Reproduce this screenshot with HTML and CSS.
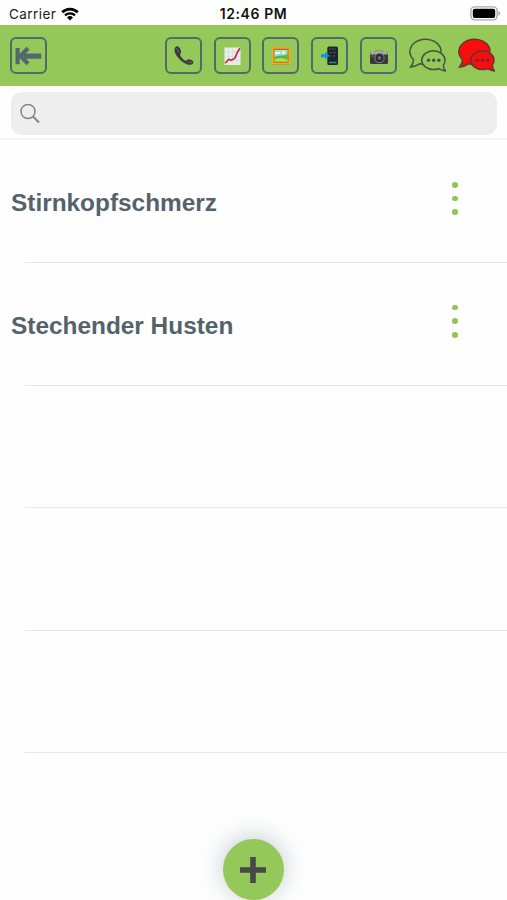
FILE: index.html
```html
<!DOCTYPE html>
<html lang="de">
<head>
    <meta charset="UTF-8">
    <title>Symptome</title>
    <link rel="stylesheet" href="styles.css">
</head>
<body>
    <div class="statusbar">
        <div class="carrier">
            <span>Carrier</span>
            <svg width="18" height="14" viewBox="0 0 18 14">
                <path d="M1.2 5.3a11.2 11.2 0 0 1 15.6 0" fill="none" stroke="#000" stroke-width="2.6"/>
                <path d="M4 8.4a7.2 7.2 0 0 1 10 0" fill="none" stroke="#000" stroke-width="2.3"/>
                <path d="M9 13.6l-3-3.2a4.3 4.3 0 0 1 6 0z"/>
            </svg>
        </div>
        <div class="clock">12:46 PM</div>
        <svg class="battery" width="31" height="15" viewBox="0 0 31 15">
            <rect x=".9" y=".9" width="26.2" height="13" rx="3.8" fill="#fff" stroke="#a9a9a9" stroke-width="1.4"/>
            <rect x="2.8" y="2.8" width="22.4" height="9.2" rx="2"/>
            <path d="M28.4 5v4.800q1.800-.8 1.800-2.400T28.400 5z" fill="#a9a9a9"/>
        </svg>
    </div>

    <div class="toolbar">
        <div class="tool back">
            <svg width="37" height="37" viewBox="0 0 37 37">
                <path d="M5.500 11h4.200v16.200H5.500zM14 16.500h17.300v5.200H14z" fill="#53686e"/>
                <path d="M18 11.300L10.500 19l7.500 7.700" fill="none" stroke="#53686e" stroke-width="4.200"/>
            </svg>
        </div>
        <div class="tool">
            <svg width="37" height="37" viewBox="0 0 37 37">
                <path d="M11.300 9.500C8.300 11 9 15.500 13 20.500c4.500 5.200 9.500 7.800 12.800 7.300 2.700-.5 3.300-2.800 1.700-4-1.500-1.200-4-2.300-5.100-1.100-.8.900-1.300 1.400-2.400.8-2-1.200-4-3.400-4.800-5.300-.5-1.300.7-1.600.9-3.200.2-2.100-2.500-6.500-4.800-5.500z" fill="#3d3b42"/>
                <path d="M11 11.300c1.200.3 2.200 2.300 2.500 4M22.500 25.500c1-.9 3-.6 4.400.3" fill="none" stroke="#77747b" stroke-width=".8"/>
            </svg>
        </div>
        <div class="tool">
            <svg width="37" height="37" viewBox="0 0 37 37">
                <rect x="10.500" y="10.500" width="16" height="17.500" fill="#e9eeec"/>
                <path d="M14.500 10.500V28M18.700 10.500V28M22.800 10.500V28M10.500 15h16M10.500 19.300h16M10.500 23.600h16" stroke="#c8dadd" stroke-width=".6"/>
                <path d="M11.200 26.200l3.500-4 2.500 1 3.700-2 2.300-5.500 2.700-4.400" fill="none" stroke="#c52d3c" stroke-width="1.700"/>
            </svg>
        </div>
        <div class="tool">
            <svg width="37" height="37" viewBox="0 0 37 37">
                <rect x="10" y="10.500" width="18" height="17" fill="#b96d0c"/>
                <rect x="10.800" y="11" width="16.500" height="15.500" fill="none" stroke="#f4a91e" stroke-width="1.600"/>
                <rect x="12.500" y="13" width="13" height="11.500" fill="#9be0f2"/>
                <path d="M12.500 20q3-2 6-1.500t7-1.500v7.500h-13z" fill="#5fb52c"/>
                <path d="M12.500 22.500q7-3 13 .5v1.500h-13z" fill="#b4dc4a"/>
                <circle cx="21.500" cy="15.500" r="1.500" fill="#fff7b0"/>
                <path d="M13 16h5" stroke="#fff" stroke-width="1.500"/>
            </svg>
        </div>
        <div class="tool">
            <svg width="37" height="37" viewBox="0 0 37 37">
                <rect x="16.300" y="9.500" width="10.700" height="18.500" rx="1.500" fill="#20272a"/>
                <path d="M18.500 12h1.500M21 12h1.500M24 12h1M18.500 15.500h2M22.500 15.500h2M18.500 19h1.500M22 19h2" stroke="#53646a" stroke-width="1.100"/>
                <path d="M18 25.500h7.500" stroke="#278b88" stroke-width="1.600"/>
                <path d="M10 17.200h4.200v-2.400l4.300 3.900-4.300 3.900v-2.400H10z" fill="#168ce0"/>
            </svg>
        </div>
        <div class="tool">
            <svg width="37" height="37" viewBox="0 0 37 37">
                <path d="M10 16.500q0-1.500 1.500-1.500h3l1.500-1.500h6l1.500 1.500h3q1.500 0 1.500 1.500v9.500q0 1-1.500 1h-15q-1.500 0-1.500-1z" fill="#383838"/>
                <path d="M10.200 17.500v-1.200q0-1 1.300-1.200h3.200l1.700-1.600h5.200l1.700 1.600h3.200q1.300.2 1.300 1.200v1.200z" fill="#aaa9a6"/>
                <circle cx="19.500" cy="21" r="5.200" fill="#777"/>
                <circle cx="19.500" cy="21" r="4" fill="#252a30"/>
                <circle cx="19.500" cy="21" r="2" fill="#626b78"/>
                <path d="M11.500 19h2" stroke="#888"/>
            </svg>
        </div>
        <svg class="bubbles" width="37" height="37" viewBox="0 0 37 37">
            <path class="bubble" d="M4.500 22.500A14 12 0 0 1 .8 15C.8 8 7.800 2.200 16.300 2.200S31.500 7.500 32 13.500Q31 27.300 16 27.300Q13.200 27.300 11 26.700Q7 29.500 1.600 30Q4.500 26.500 4.500 22.500z"/>
            <path class="bubble" d="M34.300 28.200Q34.500 31.500 36.500 34Q32.500 33.500 29.700 31.700Q27.500 32.500 24.500 32.500C18 32.500 12.700 28.500 12.700 23.300S18 13.700 24.400 13.700 36 18.100 36 23.300Q36 26.200 34.300 28.200z"/>
            <g class="dots"><circle cx="19.500" cy="23.200" r="1.700"/><circle cx="24.700" cy="23.200" r="1.700"/><circle cx="29.900" cy="23.200" r="1.700"/></g>
        </svg>
        <svg class="bubbles unread" width="37" height="37" viewBox="0 0 37 37">
            <path class="bubble" d="M4.500 22.500A14 12 0 0 1 .8 15C.8 8 7.800 2.200 16.300 2.200S31.500 7.500 32 13.500Q31 27.300 16 27.300Q13.200 27.300 11 26.700Q7 29.500 1.600 30Q4.500 26.500 4.500 22.500z"/>
            <path class="bubble" d="M34.300 28.200Q34.500 31.500 36.500 34Q32.500 33.500 29.700 31.700Q27.500 32.500 24.500 32.500C18 32.500 12.700 28.500 12.700 23.300S18 13.700 24.400 13.700 36 18.100 36 23.300Q36 26.200 34.300 28.200z"/>
            <g class="dots"><circle cx="19.500" cy="23.200" r="1.700"/><circle cx="24.700" cy="23.200" r="1.700"/><circle cx="29.900" cy="23.200" r="1.700"/></g>
        </svg>
    </div>

    <div class="search">
        <div class="search-field">
            <svg width="20" height="20" viewBox="0 0 20 20">
                <circle cx="8" cy="7.500" r="7" fill="none" stroke="#858587" stroke-width="1.500"/>
                <path d="M13 12.500l6 6" stroke="#858587" stroke-width="2"/>
            </svg>
        </div>
    </div>

    <div class="list">
        <div class="row">
            <div class="name">Stirnkopfschmerz</div>
            <div class="menu"><i></i><i></i><i></i></div>
        </div>
        <div class="row">
            <div class="name">Stechender Husten</div>
            <div class="menu"><i></i><i></i><i></i></div>
        </div>
        <div class="row"></div>
        <div class="row"></div>
        <div class="row"></div>
    </div>

    <div class="add">
        <svg width="26" height="26" viewBox="0 0 26 26">
            <path d="M13 0v26M0 13h26" stroke="#46484a" stroke-width="5.600"/>
        </svg>
    </div>
</body>
</html>
```
FILE: styles.css
```css
body {
    font-family: "Liberation Sans", Arial, sans-serif;
    margin: 0;
    height: 900px;
    overflow: hidden;
    position: relative;
    background-color: #fefefe;
}

/* status bar */
.statusbar {
    display: grid;
    grid-template-columns: 1fr auto 1fr;
    align-items: center;
    box-sizing: border-box;
    height: 25px;
    padding: 2px 6px 0 9px;
    font-family: Inter, sans-serif;
    font-size: 13.5px;
    color: #1c1c1c;
}

.carrier {
    display: flex;
    align-items: center;
    gap: 5px;
    letter-spacing: 0.45px;
}

.clock {
    margin-right: 3px;
    font-weight: 600;
    font-size: 14px;
    letter-spacing: 0.6px;
    color: #111;
}

.battery {
    justify-self: end;
}

/* toolbar */
.toolbar {
    display: flex;
    align-items: center;
    gap: 11.9px;
    box-sizing: border-box;
    height: 61px;
    padding: 0 12px 0 10.4px;
    background-color: #94c858;
}

.tool {
    position: relative;
    box-sizing: border-box;
    width: 37px;
    height: 37px;
    border: 2px solid #53696b;
    border-radius: 6px;
}

.tool svg {
    display: block;
    margin: -2px;
}

.back {
    margin-right: auto;
}

.bubble {
    fill: #94c858;
    stroke: #465345;
    stroke-width: 1.5;
}

.dots {
    fill: #465345;
}

.unread .bubble {
    fill: #fb0d0d;
    stroke: #60382f;
}

.unread .dots {
    fill: #7c2a25;
}

/* search */
.search {
    box-sizing: border-box;
    height: 54.4px;
    padding: 6px 10px 0 11px;
    border-bottom: 2px solid #f4f4f4;
}

.search-field {
    display: flex;
    align-items: center;
    height: 43px;
    padding-left: 9px;
    border-radius: 11px;
    background-color: #eee;
}

/* list */
.row {
    display: flex;
    justify-content: space-between;
    align-items: center;
    box-sizing: border-box;
    height: 122.6px;
    padding: 0 49px 0 11px;
    background: linear-gradient(#e8e8e8, #e8e8e8) 100% 100% / calc(100% - 25px) 1px no-repeat;
}

.name {
    margin-top: 3px;
    font-size: 24.4px;
    font-weight: bold;
    color: #54626a;
}

.menu {
    display: flex;
    flex-direction: column;
    gap: 8px;
    margin-bottom: 6px;
}

.menu i {
    width: 5.6px;
    height: 5.6px;
    border-radius: 50%;
    background-color: #91c554;
}

/* floating button */
.add {
    position: absolute;
    left: 223px;
    top: 839px;
    display: flex;
    justify-content: center;
    align-items: center;
    box-sizing: border-box;
    width: 61px;
    height: 61px;
    padding-right: 1px;
    border-radius: 50%;
    background-color: #94c858;
    box-shadow: 0 -2px 24px rgba(70, 85, 105, 0.32);
}
```
